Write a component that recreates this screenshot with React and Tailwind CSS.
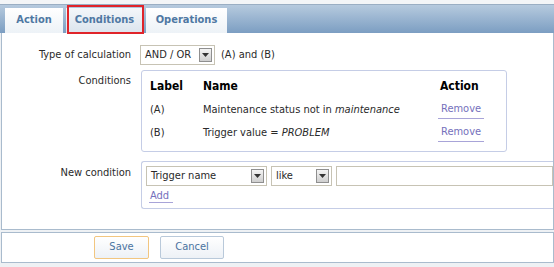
import React from "react";

const Arrow = () => (
  <span className="flex h-[14px] w-[13px] items-center justify-center border border-[#8f8f8f] bg-gradient-to-b from-[#f4f4f4] to-[#cfcfcf]">
    <svg width="7" height="4" viewBox="0 0 7 4">
      <path d="M0 0h7L3.5 4z" fill="#333" />
    </svg>
  </span>
);

const Select = ({ value, width }) => (
  <div
    className={`flex h-[20px] items-center justify-between border border-[#c7c3b4] bg-white pl-[4px] pr-[2px] ${width}`}
  >
    <span>{value}</span>
    <Arrow />
  </div>
);

const Tab = ({ label, active, width }) => (
  <div
    className={`relative flex h-[25px] items-center justify-center font-bold text-[#4f78a3] ${width} ${
      active
        ? "bg-gradient-to-b from-[#f4f7fa] to-[#dbe4ed]"
        : "bg-gradient-to-b from-white to-[#edf2f7]"
    }`}
  >
    {label}
    {active && (
      <span className="absolute left-[1px] right-[-1px] top-[-3px] bottom-[-1px] border-2 border-[#e0242a]" />
    )}
  </div>
);

const Remove = () => (
  <span className="border-b border-[#a8a4d8] px-[3px] text-[#7570bc]">Remove</span>
);

export default function App() {
  return (
    <div className="h-[267px] w-[554px] overflow-hidden bg-[#eef1f4] font-['DejaVu_Sans_Condensed','DejaVu_Sans',sans-serif] text-[11px] text-[#2a2a2a]">
      <div className="h-[4px] bg-[#f3f5f7]" />
      <div className="flex h-[29px] items-end gap-[3px] border-t border-[#9aaec3] bg-gradient-to-b from-[#b6cade] to-[#7c9ec2] pl-[5px]">
        <Tab label="Action" width="w-[58px]" />
        <Tab label="Conditions" width="w-[77px]" active />
        <Tab label="Operations" width="w-[81px]" />
      </div>

      <div className="ml-[1px] flex h-[197px] flex-col gap-[5px] border border-t-0 border-[#a9bbcd] bg-white pt-[12px]">
        <div className="flex items-center">
          <div className="w-[130px] pr-[1px] text-right">Type of calculation</div>
          <div className="ml-[8px] flex items-center gap-[6px]">
            <Select value="AND / OR" width="w-[75px]" />
            <span>(A) and (B)</span>
          </div>
        </div>

        <div className="flex items-start">
          <div className="w-[130px] pt-[3px] pr-[1px] text-right">Conditions</div>
          <div className="ml-[9px] h-[82px] w-[366px] rounded-[3px] border border-[#c5cde6] pl-[8px] pt-[7px]">
            <div className="flex h-[16px] items-center text-[12px] font-bold text-black">
              <span className="w-[53px]">Label</span>
              <span className="w-[237px]">Name</span>
              <span>Action</span>
            </div>
            <div className="mt-[8px] flex h-[16px] items-center">
              <span className="w-[53px]">(A)</span>
              <span className="w-[235px]">
                Maintenance status not in <i>maintenance</i>
              </span>
              <Remove />
            </div>
            <div className="mt-[7px] flex h-[16px] items-center">
              <span className="w-[53px]">(B)</span>
              <span className="w-[235px]">
                Trigger value = <i>PROBLEM</i>
              </span>
              <Remove />
            </div>
          </div>
        </div>

        <div className="mt-[4px] flex items-start">
          <div className="w-[130px] pt-[4px] pr-[1px] text-right">New condition</div>
          <div className="ml-[9px] h-[48px] flex-1 rounded-l-[3px] border border-r-0 border-[#c5cde6] pl-[4px] pt-[4px]">
            <div className="flex gap-[4px]">
              <Select value="Trigger name" width="w-[121px]" />
              <Select value="like" width="w-[61px]" />
              <div className="h-[20px] flex-1 border border-[#c7c3b4] bg-white" />
            </div>
            <div className="mt-[2px] pl-[3px]">
              <span className="border-b border-[#a8a4d8] px-[1px] pr-[4px] text-[#7570bc]">Add</span>
            </div>
          </div>
        </div>
      </div>

      <div className="ml-[1px] mt-[2px] flex h-[31px] items-center gap-[11px] border border-[#a9bbcd] bg-white pl-[92px]">
        <button className="h-[23px] w-[55px] rounded-[2px] border border-[#f2c680] bg-gradient-to-b from-white to-[#edf1f6] text-[#4a73a0]">
          Save
        </button>
        <button className="h-[23px] w-[64px] rounded-[2px] border border-[#b9c9da] bg-gradient-to-b from-white to-[#edf1f6] text-[#4a73a0]">
          Cancel
        </button>
      </div>
    </div>
  );
}
